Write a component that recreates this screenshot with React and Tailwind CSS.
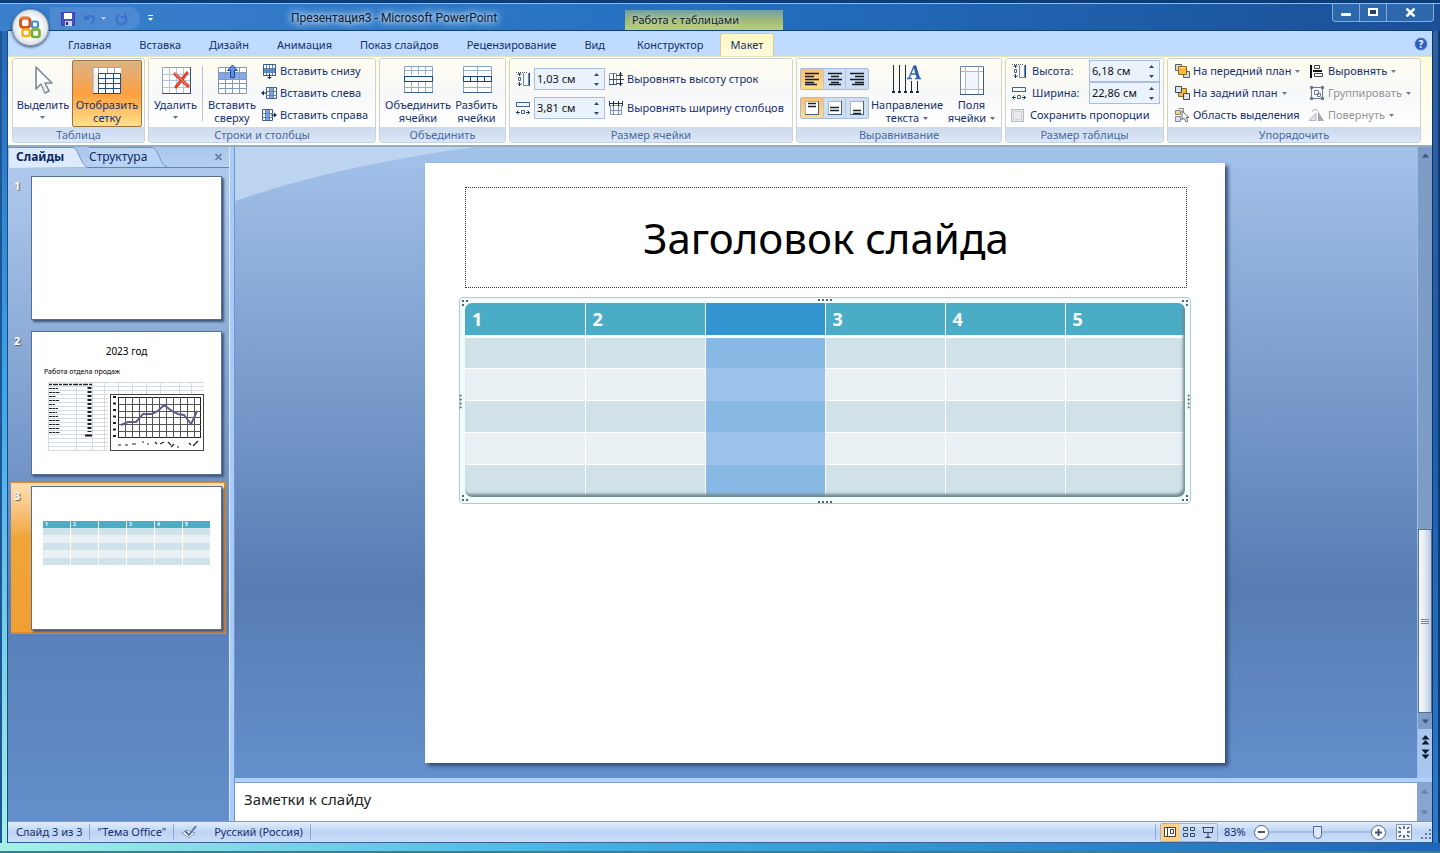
import React, { useState } from 'react';

const menuTabs = ['Главная', 'Вставка', 'Дизайн', 'Анимация', 'Показ слайдов', 'Рецензирование', 'Вид', 'Конструктор', 'Макет'];

const Caret = ({ className = '' }) => (
  <svg className={`inline-block shrink-0 ${className}`} width="5" height="3" viewBox="0 0 5 3" fill="currentColor">
    <path d="M0 0h5L2.5 3z" />
  </svg>
);

const Svg = ({ size = 16, children, className = '' }) => (
  <svg className={`shrink-0 ${className}`} width={size} height={size} viewBox={`0 0 ${size} ${size}`} fill="none">
    {children}
  </svg>
);

/* ---------- large icons ---------- */

const CursorIcon = () => (
  <Svg size={32}>
    <path d="M9 3v22l5-5 4 9 4-2-4-8h7z" fill="#fff" stroke="#7c8794" strokeWidth="1.6" strokeLinejoin="round" />
    <path d="M14 19l4 9 2-1-4-8" fill="#e4e8ee" />
  </Svg>
);

const GridIcon = () => (
  <Svg size={32}>
    <path d="M2 3.5h28v26H2z" fill="#fff" />
    <path d="M2 9h5v20H2z" fill="#f5eedc" />
    <path d="M2 3.5h28M2 3v27M7.5 3v6M16.5 3v6M23.5 3v6" stroke="#8fa6c4" />
    <path d="M7.5 9.5h22v20h-22zM7 14.5h23M7 19.5h23M7 24.5h23M14.5 9v21M22.5 9v21M2 29.5h6" stroke="#254c7d" />
  </Svg>
);

const DeleteIcon = () => (
  <Svg size={32}>
    <path d="M2.5 3.5h28v26h-28z" fill="#fff" stroke="#8aa3c3" />
    <path d="M9.5 4v25M16.5 4v25M23.5 4v25M3 10.5h27M3 16.5h27M3 23.5h27" stroke="#b3c6dd" />
    <path d="M2 29.5h29M30.5 3v27" stroke="#2f5285" />
    <path d="M15 10l13 12M27 9L16 23" stroke="#e5452c" strokeWidth="3.2" strokeLinecap="round" />
    <path d="M15 9l12 12" stroke="#f79a83" strokeWidth="1" />
  </Svg>
);

const InsertAboveIcon = () => (
  <Svg size={32}>
    <path d="M2.5 3.5h28v26h-28z" fill="#fff" stroke="#7d97b9" />
    <path d="M3 9h27v6H3z" fill="#86a8e6" />
    <path d="M9.5 4v25M16.5 4v25M23.5 4v25M3 8.5h27M3 15.5h27M3 19.5h27M3 24.5h27" stroke="#8299ba" />
    <path d="M16.5 1l5 5.500h-3v7h-4v-7h-3z" fill="#5f8ee4" stroke="#1d4796" />
  </Svg>
);

const MergeIcon = () => (
  <Svg size={32}>
    <path d="M2.5 2.5h28v26h-28z" fill="#fff" stroke="#89a0bd" />
    <path d="M9.5 3v8M16.5 3v8M23.5 3v8M9.5 18v11M16.5 18v11M23.5 18v11M3 6.5h27M3 23.5h27" stroke="#9ab0ca" />
    <path d="M2.5 12.5h28v5h-28z" fill="#f3f8ff" stroke="#1d4374" />
    <path d="M2 28.5h29" stroke="#3f5f89" />
  </Svg>
);

const SplitIcon = () => (
  <Svg size={32}>
    <path d="M2.5 2.5h28v26h-28z" fill="#fff" stroke="#89a0bd" />
    <path d="M16.5 3v8M16.5 18v11M3 6.5h27M3 23.5h27" stroke="#9ab0ca" />
    <path d="M2.5 12.5h28v5h-28zM9.5 12v6M16.5 12v6M23.5 12v6" fill="#f3f8ff" stroke="#1d4374" />
    <path d="M2 28.5h29" stroke="#3f5f89" />
  </Svg>
);

const TextDirectionIcon = () => (
  <Svg size={32}>
    <path d="M2.5 1v27M8.5 1v27M14.5 1v27M20.5 17v11M26.5 17v11" stroke="#222b38" />
    <path d="M1 27h3v2H1zM7 27h3v2H7zM13 27h3v2h-3zM19 27h3v2h-3zM25 27h3v2h-3z" fill="#222b38" />
    <path d="M18 14L23 2M20 10h7M16 14.5h5M24 14.5h6" stroke="#3a68b4" strokeWidth="1.4" />
    <path d="M23.5 1.5l4 13" stroke="#2d5ba8" strokeWidth="3" />
  </Svg>
);

const MarginsIcon = () => (
  <Svg size={32}>
    <path d="M4.5 2.5h23v28h-23z" fill="#fff" stroke="#6d84a4" />
    <path d="M9.5 3v27M22.5 3v27M5 7.5h22M5 25.5h22" stroke="#a9b9cd" />
    <path d="M10 8h12v17H10z" fill="#f0f5fd" />
    <path d="M27.5 3v28M4 30.5h24" stroke="#3c5a85" />
  </Svg>
);

/* ---------- small icons ---------- */

const InsertBelowIcon = () => (
  <Svg>
    <path d="M2.5 1.5h12v11h-12z" fill="#fff" stroke="#35598f" />
    <path d="M3 6h11v4H3z" fill="#5d8be0" />
    <path d="M5.5 2v10M8.5 2v10M11.5 2v10M3 5.5h11M3 9.5h11" stroke="#6080b0" />
    <path d="M8 11h1v3h2l-2.500 2L6 14h2z" fill="#14305c" />
  </Svg>
);

const InsertLeftIcon = () => (
  <Svg>
    <path d="M5.5 2.5h10v11h-10z" fill="#fff" stroke="#35598f" />
    <path d="M8 3h4v10H8z" fill="#7fa4e8" />
    <path d="M8.5 2v12M12.5 2v12M5 6.5h11M5 10.5h11" stroke="#6080b0" />
    <path d="M0 8l3-2.500V7.500h3v1H3v2z" fill="#14305c" />
  </Svg>
);

const InsertRightIcon = () => (
  <Svg>
    <path d="M1.5 2.5h10v11h-10z" fill="#fff" stroke="#35598f" />
    <path d="M5 3h4v10H5z" fill="#7fa4e8" />
    <path d="M4.5 2v12M8.5 2v12M1 6.5h11M1 10.5h11" stroke="#6080b0" />
    <path d="M16 8l-3-2.500V7.500h-3v1h3v2z" fill="#14305c" />
  </Svg>
);

const HeightIcon = () => (
  <Svg>
    <path d="M8.5 2v12.5h5V2" fill="#f4f8ff" stroke="#7089ac" />
    <path d="M14.5 2v13" stroke="#243f68" />
    <path d="M4.5 2v3M4.5 11v4M2.5 4l2-2 2 2M2.5 12.5l2 2 2-2" stroke="#253c60" />
    <path d="M3.5 6.5h2v3h-2z" stroke="#4f5f78" />
    <path d="M1 1.5h12" stroke="#4f5f78" strokeDasharray="1 1" />
  </Svg>
);

const WidthIcon = () => (
  <Svg>
    <path d="M1.5 7V2.5h13V7M1 6.5h14" fill="#f4f8ff" stroke="#445f88" />
    <path d="M1 12.5h4M11 12.5h4M3.500 10.500l-2 2 2 2M12.500 10.500l2 2-2 2" stroke="#253c60" />
    <path d="M6.5 10.5h3v3h-3z" stroke="#4f5f78" />
  </Svg>
);

const EqualRowsIcon = () => (
  <Svg>
    <path d="M1.5 2.5h7v11h-7z" fill="#fff" stroke="#8397b6" />
    <path d="M5.5 2v12M1 8.5h15M8 4.5h7M8 12.5h7M1 13.5h8" stroke="#35507c" />
    <path d="M12.5 1v14" stroke="#1d304f" />
    <path d="M11 3h3M11 13h3" stroke="#1d304f" />
  </Svg>
);

const EqualColsIcon = () => (
  <Svg>
    <path d="M2.5 5.5h11v9h-11zM2 10.5h12" fill="#fff" stroke="#8397b6" />
    <path d="M5.500 5v10M10.500 5v10" stroke="#7289ad" />
    <path d="M1.5 1v5M5.5 1v5M10.5 1v5M14.5 1v5M1 3.5h14" stroke="#1d304f" />
  </Svg>
);

const LinesIcon = ({ kind }) => {
  const d = {
    left: 'M1 2.5h14M1 5.5h9M1 8.5h14M1 11.5h9M1 13.5h12',
    center: 'M1 2.5h14M4 5.5h8M1 8.5h14M4 11.5h8M2 13.5h12',
    right: 'M1 2.5h14M6 5.5h9M1 8.5h14M6 11.5h9M3 13.5h12',
  }[kind];
  return (
    <Svg>
      <path d={d} stroke="#181d29" strokeWidth="1.5" />
    </Svg>
  );
};

const CellAlignIcon = ({ kind }) => {
  const d = { top: 'M4 3.5h8M4 6.5h8', middle: 'M3 7.5h9M3 10.5h9', bottom: 'M4 10.5h8M4 13.5h8' }[kind];
  return (
    <Svg>
      <path d="M1.5 1.5h13v13h-13z" fill="#fff" stroke="#a6b4c9" />
      <path d="M14.5 1v14M1 14.5h14" stroke="#4c6082" />
      <path d={d} stroke="#1a2231" strokeWidth="1.4" />
    </Svg>
  );
};

const FrontIcon = () => (
  <Svg>
    <path d="M1.5 1.5h6v6h-6zM9.5 8.5h6v6h-6z" fill="#d7dbe0" stroke="#53616f" />
    <path d="M4.5 3.5h8v8h-8z" fill="#f6b93e" stroke="#8f6a1c" />
    <path d="M5.5 4.5h6" stroke="#fde6a8" />
  </Svg>
);

const BackIcon = () => (
  <Svg>
    <path d="M4.5 3.5h8v8h-8z" fill="#f6b93e" stroke="#8f6a1c" />
    <path d="M1.5 1.5h6v6h-6zM9.5 8.5h6v6h-6z" fill="#dfe3e8" stroke="#3d4a58" />
  </Svg>
);

const SelectionIcon = () => (
  <Svg>
    <path d="M1.5 3.5h5v4h-5z" fill="#f2d58a" stroke="#8d8672" />
    <path d="M4.5 1.5h5v4M1.5 9.5h5v5h-5z" fill="#dfe3e8" stroke="#828c97" />
    <path d="M8 4v9l2-2 2 4 2-1-2-3.500h3z" fill="#fff" stroke="#5f6c7b" />
  </Svg>
);

const AlignIcon = () => (
  <Svg>
    <path d="M2 2v13" stroke="#111" strokeWidth="2" />
    <path d="M5.5 2.5h5v3h-5zM5.5 10.5h8v3h-8z" fill="#fff" stroke="#3b4655" />
    <path d="M4 8h9" stroke="#111" strokeWidth="2" />
  </Svg>
);

const GroupIcon = () => (
  <Svg>
    <path d="M2.5 2.5h11v11h-11zM5.5 5.5h4v4h-4zM8.5 8.5h3v3h-3z" stroke="#6c7c98" />
    <path d="M1 1h3v3H1zM12 1h3v3h-3zM1 12h3v3H1zM12 12h3v3h-3z" fill="#6c7c98" />
  </Svg>
);

const RotateIcon = () => (
  <Svg>
    <path d="M0 13.5h7V6z" fill="#e0e2e6" stroke="#b3b8c2" />
    <path d="M9 14V4l6 10z" fill="#a5aab5" />
    <path d="M3 5c1-3 4-3 5-2l1 1" stroke="#a5aab5" />
  </Svg>
);

/* ---------- ribbon building blocks ---------- */

const Group = ({ label, className, children }) => (
  <section className={`flex shrink-0 flex-col overflow-hidden rounded-[3px] border border-[#c9d3df] bg-white ${className}`}>
    <div className="flex flex-1 bg-linear-to-b from-[#fffdf0] via-[#f7f8f9] to-white pt-px">{children}</div>
    <h2 className="h-[15px] shrink-0 bg-linear-to-b from-[#ccdaee] to-[#dce7f5] text-center text-[11px] leading-[15px] text-[#4769a6]">
      {label}
    </h2>
  </section>
);

const BigButton = ({ icon, lines, caret, active, className = '' }) => (
  <button
    className={`flex h-[67px] shrink-0 flex-col items-center gap-0.5 rounded-[2px] pt-[3px] text-[11px] leading-[13px] whitespace-nowrap ${
      active
        ? 'border border-[#9c7440] bg-linear-to-b from-[#dcb384] via-[#fb9f3e] to-[#ffe18b]'
        : 'border border-transparent'
    } ${className}`}
  >
    {icon}
    <span className="flex flex-col items-center">
      {lines.map((line, i) => (
        <span key={line}>
          {line}
          {caret && lines.length > 1 && i === lines.length - 1 && <Caret className="mb-0.5 ml-1 text-[#5c6f93]" />}
        </span>
      ))}
      {caret && lines.length === 1 && <Caret className="mt-[5px] text-[#5c6f93]" />}
    </span>
  </button>
);

const SmallButton = ({ icon, label, caret, disabled }) => (
  <button disabled={disabled} className="flex h-[22px] items-center gap-[3px] text-[11px] whitespace-nowrap disabled:text-[#949494]">
    {icon}
    {label}
    {caret && <Caret className="ml-px text-[#6d7b93]" />}
  </button>
);

const SpinBox = ({ id, label, value, className = '' }) => (
  <span className={`flex h-[22px] w-[71px] shrink-0 items-stretch border border-[#a9bfdd] bg-[#eaf2fb] ${className}`}>
    <input id={id} aria-label={label} defaultValue={value} className="w-0 min-w-0 flex-1 bg-transparent pl-0.5 text-[11px] text-[#111] outline-none" />
    <span className="flex w-4 flex-col text-[#33496f]">
      <button aria-label="Больше" className="flex flex-1 items-center justify-center">
        <Caret className="rotate-180" />
      </button>
      <button aria-label="Меньше" className="flex flex-1 items-center justify-center">
        <Caret />
      </button>
    </span>
  </span>
);

const Toggles = ({ children }) => (
  <div className="flex h-[22px] w-[69px] overflow-hidden rounded-[2px] border border-[#a5bcdc] bg-[#cfdff3]">{children}</div>
);

const Toggle = ({ label, active, children }) => (
  <button
    aria-label={label}
    aria-pressed={!!active}
    className={`flex flex-1 items-center justify-center border-r border-[#b4c8e4] last:border-r-0 ${active ? 'bg-linear-to-b from-[#f9bf74] to-[#fddc85]' : ''}`}
  >
    {children}
  </button>
);

/* ---------- window chrome ---------- */

const OfficeLogo = () => (
  <svg width="25" height="25" viewBox="0 0 25 25" fill="none">
    <rect x="2.5" y="3" width="9.5" height="9.5" rx="3" stroke="#d9531e" strokeWidth="3" />
    <path d="M3 4q4-3 8 0" stroke="#f08a3c" strokeWidth="1.5" />
    <rect x="14" y="6.5" width="6" height="6" rx="1.5" stroke="#3f8fe0" strokeWidth="2.2" />
    <rect x="4.5" y="14.5" width="7" height="6.5" rx="1.5" stroke="#f2b21c" strokeWidth="2.4" />
    <rect x="14" y="14.500" width="7.5" height="7.500" rx="2" stroke="#6fae2e" strokeWidth="2.6" />
  </svg>
);

const TitleBar = () => (
  <header className="relative flex h-[31px] shrink-0 items-stretch border-t-3 border-[#0c3d79] bg-linear-to-r from-[#3a80cc] via-[#2370c0] to-[#1a4f96] pr-[6px] pl-[50px]">
    <div className="absolute inset-x-0 top-0 h-px bg-[#8fb9e4]" />
    <div className="absolute inset-x-2 bottom-0 h-px bg-[#123f78]" />
    <div className="mt-1 mb-px flex w-[90px] items-center gap-1.5 rounded-r-full bg-[#5f96d6]/50 pl-[11px]">
      <button aria-label="Сохранить">
        <svg width="14" height="14" viewBox="0 0 14 14" fill="none">
          <path d="M.5.500h13v13H.5z" fill="#4a4fc0" stroke="#3a3ea6" />
          <path d="M3 1h8v6H3z" fill="#fff" />
          <path d="M4 9h7v5H4z" fill="#cfd6ee" />
          <path d="M5 10h2v3H5z" fill="#25286f" />
        </svg>
      </button>
      <button aria-label="Отменить" className="ml-0.5 flex items-center gap-1 text-[#b8d3f2]">
        <svg width="14" height="14" viewBox="0 0 14 14" fill="none">
          <path d="M2 3v4h4M2 7c3-4 9-4 9 0 0 2-1 3-3 5" stroke="#3c6fd0" strokeWidth="2" />
        </svg>
        <Caret />
      </button>
      <button aria-label="Вернуть" className="ml-0.5">
        <svg width="14" height="14" viewBox="0 0 14 14" fill="none">
          <path d="M11 4a5 5 0 1 1-6-1M11 1v4H7" stroke="#3c6fd0" strokeWidth="2" />
        </svg>
      </button>
    </div>
    <button aria-label="Настройка панели" className="ml-2 flex flex-col items-center justify-center gap-0.5 pt-0.5 text-white">
      <span className="h-px w-[5px] bg-white" />
      <Caret />
    </button>
    <h1 className="ml-[138px] flex items-center pt-0.5 text-[12px] text-[#0b1c33] [font-family:Roboto,'Noto_Sans',sans-serif] [text-shadow:0_0_5px_#d5e6f8,0_0_8px_#d5e6f8,0_0_10px_#b9d4f0]">
      Презентация3 - Microsoft PowerPoint
    </h1>
    <div className="absolute top-[7px] bottom-px left-[625px] w-[158px] bg-linear-to-b from-[#6d9fa8] via-[#9fb877] to-[#b9cf7a] pl-[7px] text-[11px] leading-[20px] text-[#0b1c33] [text-shadow:0_0_5px_#e4edd2]">
      Работа с таблицами
    </div>
    <div className="ml-auto flex h-[19px] overflow-hidden rounded-b-[4px] border border-t-0 border-[#86abd6] bg-[#2e68ac] text-white">
      <button aria-label="Свернуть" className="flex w-[27px] items-center justify-center border-r border-[#86abd6]">
        <span className="mt-1 h-[3px] w-[10px] rounded-[1px] bg-white" />
      </button>
      <button aria-label="Развернуть" className="flex w-[27px] items-center justify-center border-r border-[#86abd6]">
        <span className="h-2 w-[10px] border-2 border-white bg-[#2b3f63]" />
      </button>
      <button aria-label="Закрыть" className="flex w-[46px] items-center justify-center">
        <svg width="11" height="9" viewBox="0 0 11 9" fill="none">
          <path d="M1.5.5l8 8M9.5.5l-8 8" stroke="#fff" strokeWidth="2.5" />
        </svg>
      </button>
    </div>
    <button aria-label="Office" className="absolute top-[6px] left-[12px] z-10 flex size-[37px] items-center justify-center rounded-full border border-[#8d98a8] bg-radial from-white from-40% to-[#b9c3d1] shadow-[0_1px_3px_#1d3c66]">
      <OfficeLogo />
    </button>
  </header>
);

const MenuTabs = () => (
  <nav className="flex h-[25px] shrink-0 items-end bg-[#bfdbff] pr-1 pl-[46px]">
    {menuTabs.map((tab) => (
      <button
        key={tab}
        className={`h-[23px] text-[11px] leading-[20px] whitespace-nowrap ${
          tab === 'Макет'
            ? 'ml-0.5 rounded-t-[3px] border border-b-0 border-[#d8ce8e] bg-linear-to-b from-[#fdf6c4] to-[#fffbe0] px-[10px]'
            : tab === 'Конструктор'
              ? 'ml-1 px-[14px]'
              : 'px-[14px]'
        }`}
      >
        {tab}
      </button>
    ))}
    <button aria-label="Справка" className="mb-[5px] ml-auto flex size-[14px] items-center justify-center rounded-full border border-[#b9cdf0] bg-[#2f62c4] text-[10px] leading-none font-bold text-white">
      ?
    </button>
  </nav>
);

const Ribbon = () => (
  <div className="flex h-[91px] shrink-0 gap-[3px] overflow-hidden border-t border-b-2 border-t-[#e7e2b8] border-b-[#8fb0c4] bg-linear-to-b from-[#fffcdc] to-[#fffef8] px-1 pt-px pb-0.5">
    <Group label="Таблица" className="w-[133px]">
      <BigButton icon={<CursorIcon />} lines={['Выделить']} caret className="ml-px w-[58px]" />
      <BigButton icon={<GridIcon />} lines={['Отобразить', 'сетку']} active className="w-[70px]" />
    </Group>

    <Group label="Строки и столбцы" className="w-[228px]">
      <BigButton icon={<DeleteIcon />} lines={['Удалить']} caret className="w-[53px]" />
      <div className="my-1.5 w-px bg-[#b8c4d3]" />
      <BigButton icon={<InsertAboveIcon />} lines={['Вставить', 'сверху']} className="w-[58px]" />
      <div>
        <SmallButton icon={<InsertBelowIcon />} label="Вставить снизу" />
        <SmallButton icon={<InsertLeftIcon />} label="Вставить слева" />
        <SmallButton icon={<InsertRightIcon />} label="Вставить справа" />
      </div>
    </Group>

    <Group label="Объединить" className="w-[127px]">
      <BigButton icon={<MergeIcon />} lines={['Объединить', 'ячейки']} className="ml-[3px] w-[70px]" />
      <BigButton icon={<SplitIcon />} lines={['Разбить', 'ячейки']} className="w-[47px]" />
    </Group>

    <Group label="Размер ячейки" className="w-[284px]">
      <div className="flex flex-col gap-[7px] pt-2 pl-[5px]">
        <div className="flex items-center gap-[3px]">
          <HeightIcon />
          <SpinBox id="row-height" label="Высота строки" value="1,03 см" />
          <SmallButton icon={<EqualRowsIcon />} label="Выровнять высоту строк" />
        </div>
        <div className="flex items-center gap-[3px]">
          <WidthIcon />
          <SpinBox id="col-width" label="Ширина столбца" value="3,81 см" />
          <SmallButton icon={<EqualColsIcon />} label="Выровнять ширину столбцов" />
        </div>
      </div>
    </Group>

    <Group label="Выравнивание" className="w-[206px]">
      <div className="flex flex-col gap-[7px] pt-2 pl-[3px]">
        <Toggles>
          <Toggle label="По левому краю" active><LinesIcon kind="left" /></Toggle>
          <Toggle label="По центру"><LinesIcon kind="center" /></Toggle>
          <Toggle label="По правому краю"><LinesIcon kind="right" /></Toggle>
        </Toggles>
        <Toggles>
          <Toggle label="По верхнему краю" active><CellAlignIcon kind="top" /></Toggle>
          <Toggle label="По середине"><CellAlignIcon kind="middle" /></Toggle>
          <Toggle label="По нижнему краю"><CellAlignIcon kind="bottom" /></Toggle>
        </Toggles>
      </div>
      <BigButton icon={<TextDirectionIcon />} lines={['Направление', 'текста']} caret className="w-[76px]" />
      <BigButton icon={<MarginsIcon />} lines={['Поля', 'ячейки']} caret className="w-[53px]" />
    </Group>

    <Group label="Размер таблицы" className="w-[159px]">
      <div className="flex flex-1 flex-col pl-[5px] text-[11px]">
        <div className="flex h-[22px] items-center">
          <HeightIcon />
          <label htmlFor="table-height" className="ml-[5px] flex-1">Высота:</label>
          <SpinBox id="table-height" value="6,18 см" className="mr-[3px]" />
        </div>
        <div className="flex h-[22px] items-center">
          <WidthIcon />
          <label htmlFor="table-width" className="ml-[5px] flex-1">Ширина:</label>
          <SpinBox id="table-width" value="22,86 см" className="mr-[3px]" />
        </div>
        <label className="flex h-[22px] items-center gap-1.5 whitespace-nowrap">
          <input type="checkbox" className="size-[13px] appearance-none border border-[#b5b9c0] bg-[#e9ebee] outline-1 -outline-offset-3 outline-[#cfd3d9] checked:bg-[#4769a6]" />
          Сохранить пропорции
        </label>
      </div>
    </Group>

    <Group label="Упорядочить" className="w-[254px]">
      <div className="w-[135px] pl-1.5">
        <SmallButton icon={<FrontIcon />} label="На передний план" caret />
        <SmallButton icon={<BackIcon />} label="На задний план" caret />
        <SmallButton icon={<SelectionIcon />} label="Область выделения" />
      </div>
      <div className="pl-1.5">
        <SmallButton icon={<AlignIcon />} label="Выровнять" caret />
        <SmallButton icon={<GroupIcon />} label="Группировать" caret disabled />
        <SmallButton icon={<RotateIcon />} label="Повернуть" caret disabled />
      </div>
    </Group>
  </div>
);

/* ---------- slides panel ---------- */

const ChartThumb = () => (
  <span className="flex flex-col">
    <span className="mt-3 text-center text-[10px] leading-[14px] text-black">2023 год</span>
    <span className="mt-[9px] ml-3 text-[7px] leading-[9px] text-black">Работа отдела продаж</span>
    <svg className="mt-1 ml-4" width="158" height="72" viewBox="0 0 158 72" fill="none">
      <path d="M0 2.5h156M0 6.5h156M0 10.5h156M0 14.5h60M0 18.5h60M0 22.5h60M0 26.5h60M0 30.5h60M0 34.5h60M0 38.5h60M0 42.5h60M0 46.5h60M0 50.5h60M0 54.5h60M0 58.5h60M0 62.5h60M0 66.5h60M0 70.5h60M.5 2v69M28.5 2v69M44.5 2v69M56.5 2v69M70.5 2v12M84.5 2v12M98.5 2v12M112.5 2v12M131.5 2v12M143.5 2v12" stroke="#d4dae1" />
      <path d="M1 4.5h43" stroke="#222" strokeWidth="1.3" strokeDasharray="3 1 5 1" />
      <path d="M1 8.5h9M1 12.5h11M1 16.5h7M1 20.5h10M1 24.5h6M1 28.5h9M1 32.5h8M1 36.5h9M1 40.5h11M1 44.5h11M1 48.5h10M1 52.5h11" stroke="#222" strokeWidth="1.2" strokeDasharray="3 .5" />
      <path d="M41.5 7v45" stroke="#222" strokeWidth="4" strokeDasharray="2 2" />
      <path d="M37 55.5h7" stroke="#111" strokeWidth="2" />
      <rect x="62.5" y="14.5" width="93" height="56" fill="#fff" stroke="#444" />
      <rect x="70.5" y="17.5" width="82" height="40" stroke="#222" />
      <path d="M77.5 17v41M84.5 17v41M91.5 17v41M98.5 17v41M104.5 17v41M111.5 17v41M118.5 17v41M125.5 17v41M132.5 17v41M139.5 17v41M146.5 17v41M70 24.5h83M70 31.5h83M70 37.5h83M70 44.5h83M70 51.5h83" stroke="#555" />
      <path d="M66.5 16v42" stroke="#222" strokeWidth="3" strokeDasharray="2 4.5" />
      <path d="M73 45l7-3h8l7-8h9l6-3 6-6 8 6 6 3 6 1 7 9 3-6 3-7" stroke="#67588c" strokeWidth="2" />
      <path d="M70 65h3M77 65h3M84 64h4M94 62h2M99 64h2M107 62l2 2M112 64l4-2M120 62l3 3M123 67l3-3M129 67h2M141 63l2 2M145 66l5-5" stroke="#222" strokeWidth="1.2" />
    </svg>
  </span>
);

const TableThumb = () => (
  <span className="grid grid-cols-6 gap-x-px bg-white px-[11px] pt-[34px]">
    {['1', '2', '', '3', '4', '5'].map((n, i) => (
      <span key={i} className="h-[7px] bg-[#4bacc6] pl-0.5 text-[5px] leading-[7px] font-bold text-white">{n}</span>
    ))}
    {Array.from({ length: 30 }).map((_, i) => (
      <span key={i} className={Math.floor(i / 6) % 2 ? 'h-2 bg-[#e9f1f5]' : 'h-[7px] bg-[#d0e3ea]'} />
    ))}
  </span>
);

const SlideItem = ({ number, selected, onSelect, children }) => (
  <button
    onClick={onSelect}
    className={`mb-[3px] flex h-[152px] w-full items-start gap-2 border-t border-r-2 border-b-2 pt-[3px] pl-[3px] text-left ${
      selected ? 'border-[#e08a2c] bg-linear-to-b from-[#fde0b4] via-[#f0a437] via-37% to-[#f0a032]' : 'border-transparent'
    }`}
  >
    <span className="w-[9px] pt-0.5 text-[11px] leading-4 font-bold text-white [text-shadow:1px_1px_1px_#5a5a5a]">{number}</span>
    <span className="block h-[144px] w-[191px] shrink-0 overflow-hidden border border-[#5a6f90] bg-white shadow-[2px_2px_2px_#40587f]">
      {children}
    </span>
  </button>
);

const SlidesPanel = () => {
  const [current, setCurrent] = useState(3);
  return (
    <aside className="flex w-[221px] shrink-0 flex-col bg-linear-to-b from-[#b3cdef] via-[#587eb6] via-68% to-[#648fca]">
      <div className="flex h-[21px] shrink-0 items-stretch border-b border-[#6184b8] bg-linear-to-b from-[#a9c5ea] to-[#b6d0f1] text-[12px] leading-[20px] text-[#0f2a5e]">
        <button className="relative w-[81px] pl-2 text-left font-bold">
          <svg className="absolute inset-0" width="81" height="21" fill="none">
            <path d="M0 21V.5h64c4 0 5 4 8 10s5 9 8 10" fill="#dceafb" stroke="#7092c4" />
          </svg>
          <span className="relative">Слайды</span>
        </button>
        <button className="relative w-[78px] text-left">
          <svg className="absolute inset-0" width="78" height="20" fill="none">
            <path d="M0 18C-4 14-7 8-8 3q0-2.500 2-2.500h68c5 0 7 7 9 11s4 8 7 8" fill="#b9d3f4" stroke="#7092c4" />
          </svg>
          <span className="relative">Структура</span>
        </button>
        <button aria-label="Закрыть" className="mr-1.5 ml-auto">
          <svg width="9" height="8" viewBox="0 0 9 8" fill="none">
            <path d="M1.5 1l6 6M7.5 1l-6 6" stroke="#5d769c" strokeWidth="1.5" />
          </svg>
        </button>
      </div>
      <div className="flex-1 overflow-hidden pt-1 pr-[3px] pl-[3px]">
        <SlideItem number="1" selected={current === 1} onSelect={() => setCurrent(1)} />
        <SlideItem number="2" selected={current === 2} onSelect={() => setCurrent(2)}>
          <ChartThumb />
        </SlideItem>
        <SlideItem number="3" selected={current === 3} onSelect={() => setCurrent(3)}>
          <TableThumb />
        </SlideItem>
      </div>
    </aside>
  );
};

/* ---------- slide ---------- */

const headers = ['1', '2', '', '3', '4', '5'];

const Dots = ({ className }) => (
  <svg className={`absolute ${className}`} width="14" height="3" viewBox="0 0 14 3" fill="#4e6670">
    <path d="M0 1h2v2H0zM4 1h2v2H4zM8 1h2v2H8zM12 1h2v2h-2z" />
  </svg>
);

const Corner = ({ className }) => (
  <svg className={`absolute ${className}`} width="6" height="6" viewBox="0 0 6 6" fill="#4e6670">
    <path d="M0 0h2v2H0zM4 0h2v2H4zM0 4h2v2H0z" />
  </svg>
);

const Slide = () => (
  <article className="flex h-[600px] w-[800px] shrink-0 flex-col bg-white px-[34px] pt-6 shadow-[3px_3px_4px_#2f4c78]">
    <h2 className="mr-1 ml-1.5 flex h-[101px] items-center justify-center border border-dotted border-[#333] text-[42px] text-black">
      Заголовок слайда
    </h2>
    <div className="relative mt-[9px] rounded-[4px] border border-[#a5cfd0] bg-[#f1fcfc] px-[5px] pt-[5px] pb-1.5">
      <div className="overflow-hidden rounded-[7px]">
        <div className="relative">
          <table className="w-full table-fixed border-collapse text-left text-[18px] leading-none text-white">
            <thead>
              <tr>
                {headers.map((h, i) => (
                  <th
                    key={i}
                    className={`h-[34px] border-b-3 border-l border-b-white border-l-white pl-[7px] font-bold first:border-l-0 ${
                      i === 2 ? 'border-b-[#9cc6f0] bg-[#3395cf]' : 'bg-[#4bacc6]'
                    }`}
                  >
                    {h}
                  </th>
                ))}
              </tr>
            </thead>
            <tbody>
              {[0, 1, 2, 3, 4].map((row) => (
                <tr key={row}>
                  {headers.map((_, i) => (
                    <td
                      key={i}
                      className={`h-8 border-l border-l-white first:border-l-0 ${row ? 'border-t' : ''} ${
                        i === 2
                          ? row % 2
                            ? 'border-t-[#9dc3ee] bg-[#9cc2ec]'
                            : 'border-t-[#9dc3ee] bg-[#88b8e4]'
                          : row % 2
                            ? 'border-t-white bg-[#e8f0f3]'
                            : 'border-t-white bg-[#d0e2e8]'
                      }`}
                    />
                  ))}
                </tr>
              ))}
            </tbody>
          </table>
          <div className="pointer-events-none absolute inset-0 rounded-[7px] shadow-[inset_-2px_-3px_3px_#71898f]" />
        </div>
      </div>
      <Dots className="top-0 left-1/2 -translate-x-1/2" />
      <Dots className="bottom-0 left-1/2 -translate-x-1/2" />
      <Dots className="top-1/2 -left-1.5 rotate-90" />
      <Dots className="top-1/2 -right-1.5 rotate-90" />
      <Corner className="top-0.5 left-0.5" />
      <Corner className="top-0.5 right-0.5 rotate-90" />
      <Corner className="bottom-0.5 left-0.5 -rotate-90" />
      <Corner className="right-0.5 bottom-0.5 rotate-180" />
    </div>
  </article>
);

const ScrollBar = () => (
  <div className="flex w-[15px] shrink-0 flex-col border-l border-[#9dbde8] bg-[#7d9cc6] text-[#3f5780]">
    <button aria-label="Вверх" className="flex h-4 items-center justify-center">
      <Caret className="scale-150 rotate-180" />
    </button>
    <div className="flex-1" />
    <div className="flex h-[184px] items-center justify-center border border-[#5c7190] bg-linear-to-r from-[#f7fafc] via-[#e4eaf0] to-[#b4c6e2]">
      <span className="flex w-2 flex-col gap-px">
        <span className="h-px bg-[#7387a5]" />
        <span className="h-px bg-[#7387a5]" />
        <span className="h-px bg-[#7387a5]" />
      </span>
    </div>
    <button aria-label="Вниз" className="flex h-4 items-center justify-center">
      <Caret className="scale-150" />
    </button>
    <div className="flex h-[49px] flex-col items-center gap-1 bg-[#a8c6f0] pt-1.5 text-[#0e1a30]">
      <button aria-label="Предыдущий слайд">
        <svg width="9" height="10" viewBox="0 0 9 10" fill="currentColor">
          <path d="M4.5 0L8.5 4.5h-8zM4.5 5l4 4.5h-8z" />
        </svg>
      </button>
      <button aria-label="Следующий слайд">
        <svg width="9" height="10" viewBox="0 0 9 10" fill="currentColor">
          <path d="M.5.5h8L4.5 5zM.5 5.5h8l-4 4.5z" />
        </svg>
      </button>
    </div>
  </div>
);

const Workspace = () => (
  <main className="flex min-w-0 flex-1 flex-col">
    <div className="flex min-h-0 flex-1">
      <div className="relative flex min-w-0 flex-1 items-center justify-center overflow-hidden bg-linear-to-b from-[#a3c2ea] via-[#587cb3] via-70% to-[#6490cc] pr-0.5">
        <svg className="absolute top-0 left-0" width="240" height="56" viewBox="0 0 240 56">
          <path d="M0 0h240C150 12 70 30 0 54z" fill="#bdd4f0" />
        </svg>
        <div className="relative">
          <Slide />
        </div>
      </div>
      <ScrollBar />
    </div>
    <div className="h-[5px] shrink-0 border-b border-[#7f9fcd] bg-[#afd0f8]" />
    <div className="flex h-[38px] shrink-0 bg-white">
      <textarea aria-label="Заметки" defaultValue="Заметки к слайду" className="flex-1 resize-none overflow-hidden px-[9px] pt-1.5 text-[15px] leading-5 text-[#222] outline-none" />
      <div className="flex w-[15px] flex-col items-center justify-between bg-[#87a5d0] py-[7px] text-[#66809f]">
        <Caret className="scale-150 rotate-180" />
        <Caret className="scale-150" />
      </div>
    </div>
  </main>
);

/* ---------- status bar ---------- */

const Separator = ({ className }) => <span className={`h-4 w-px bg-[#8dabd6] ${className}`} />;

const StatusBar = () => {
  const [zoom, setZoom] = useState(83);
  return (
    <footer className="flex h-[22px] shrink-0 items-center border-t border-b border-t-[#7a9bc9] border-b-[#3a6299] bg-linear-to-b from-[#e2edfb] via-[#bcd3f3] to-[#c9def9] pl-2 text-[11px] whitespace-nowrap">
      <span>Слайд 3 из 3</span>
      <Separator className="ml-[7px]" />
      <span className="ml-[7px]">"Тема Office"</span>
      <Separator className="ml-[7px]" />
      <Svg className="ml-[7px]">
        <path d="M1 9l5-3 8 3-6 5z" fill="#f5f8fc" stroke="#8799b5" />
        <path d="M4 7l4 4 7-9" stroke="#5b78a5" strokeWidth="2" />
      </Svg>
      <span className="ml-[17px]">Русский (Россия)</span>
      <Separator className="ml-[7px]" />
      <div className="flex-1" />
      <Separator className="mr-1" />
      <div className="flex h-[19px] w-[58px] overflow-hidden rounded-[2px] border border-[#9bb6dd]">
        <button aria-label="Обычный" className="flex flex-1 items-center justify-center bg-[#fbd285]">
          <svg width="12" height="12" viewBox="0 0 12 12" fill="none" stroke="#4a3f2a">
            <path d="M.5 1.5h11v9H.5zM3.5 2v9M6.5 3.5h3v4h-3z" fill="#fff" />
          </svg>
        </button>
        <button aria-label="Сортировщик" className="flex flex-1 items-center justify-center">
          <svg width="12" height="12" viewBox="0 0 12 12" fill="none" stroke="#3d4a60">
            <path d="M.5 1.5h4v3h-4zM7.5 1.5h4v3h-4zM.5 7.5h4v3h-4zM7.5 7.5h4v3h-4z" />
          </svg>
        </button>
        <button aria-label="Показ слайдов" className="flex flex-1 items-center justify-center">
          <svg width="12" height="12" viewBox="0 0 12 12" fill="none" stroke="#3d4a60">
            <path d="M0 1.5h12M1.5 2v4.5h9V2M6 7v3M3 11.5h6M5 10.5h2" />
          </svg>
        </button>
      </div>
      <label htmlFor="zoom" className="ml-1.5 w-[23px]">{zoom}%</label>
      <button aria-label="Уменьшить" onClick={() => setZoom(zoom - 1)} className="ml-[7px] flex size-[15px] items-center justify-center rounded-full border border-[#51678c] bg-white">
        <span className="h-0.5 w-[7px] bg-[#44536e]" />
      </button>
      <input
        id="zoom"
        type="range"
        min="10"
        max="166"
        value={zoom}
        onChange={(e) => setZoom(Number(e.target.value))}
        className="h-[14px] w-[102px] appearance-none bg-linear-to-b from-transparent from-45% via-[#6482b3] via-50% to-transparent to-55% [&::-webkit-slider-thumb]:h-[13px] [&::-webkit-slider-thumb]:w-[9px] [&::-webkit-slider-thumb]:appearance-none [&::-webkit-slider-thumb]:rounded-b-full [&::-webkit-slider-thumb]:border [&::-webkit-slider-thumb]:border-[#4c679a] [&::-webkit-slider-thumb]:bg-[#dfe9f8]"
      />
      <button aria-label="Увеличить" onClick={() => setZoom(zoom + 1)} className="flex size-[15px] items-center justify-center rounded-full border border-[#51678c] bg-white">
        <svg width="9" height="9" viewBox="0 0 9 9" stroke="#44536e" strokeWidth="2">
          <path d="M1 4.5h7M4.5 1v7" />
        </svg>
      </button>
      <button aria-label="Вписать" className="ml-2.5">
        <Svg>
          <path d="M.5.5h15v15H.5z" fill="#f5f8fc" stroke="#7e92b4" />
          <path d="M8 2v3M8 11v3M2 8h3M11 8h3M3 3l2 2M13 3l-2 2M3 13l2-2M13 13l-2-2" stroke="#34496e" strokeWidth="1.5" />
        </Svg>
      </button>
      <svg className="mt-1 ml-2 shrink-0" width="12" height="12" viewBox="0 0 12 12" fill="#5f7dad">
        <path d="M9 1h2v2H9zM5 5h2v2H5zM9 5h2v2H9zM1 9h2v2H1zM5 9h2v2H5zM9 9h2v2H9z" />
      </svg>
    </footer>
  );
};

const App = () => (
  <div className="flex h-screen flex-col overflow-hidden bg-[#123f7c] text-[11px] text-[#15306b] [font-family:'Noto_Sans','Open_Sans',sans-serif]">
    <TitleBar />
    <div className="flex min-h-0 flex-1">
      <div className="w-2 shrink-0 border-r border-l-2 border-r-[#1b4a80] border-l-[#1c5694] bg-linear-to-b from-[#2668b8] via-[#3fa6ea] via-45% to-[#a5f0e6]" />
      <div className="flex min-w-0 flex-1 flex-col">
        <MenuTabs />
        <Ribbon />
        <div className="flex min-h-0 flex-1">
          <SlidesPanel />
          <div className="w-[6px] shrink-0 border-r border-l border-r-[#6f96d3] border-l-[#dbe9fb] bg-[#a9cbf7]" />
          <Workspace />
        </div>
        <StatusBar />
      </div>
      <div className="w-2 shrink-0 border-r-2 border-l border-r-[#0d3a70] border-l-[#0e3566] bg-linear-to-b from-[#315f9f] via-[#1d5cab] to-[#2f7bcb]" />
    </div>
    <div className="h-[10px] shrink-0 border-b-2 border-[#3b7f8c] bg-linear-to-r from-[#a5f3e8] via-[#45b2e4] via-40% to-[#1d66b6]" />
  </div>
);

export default App;
